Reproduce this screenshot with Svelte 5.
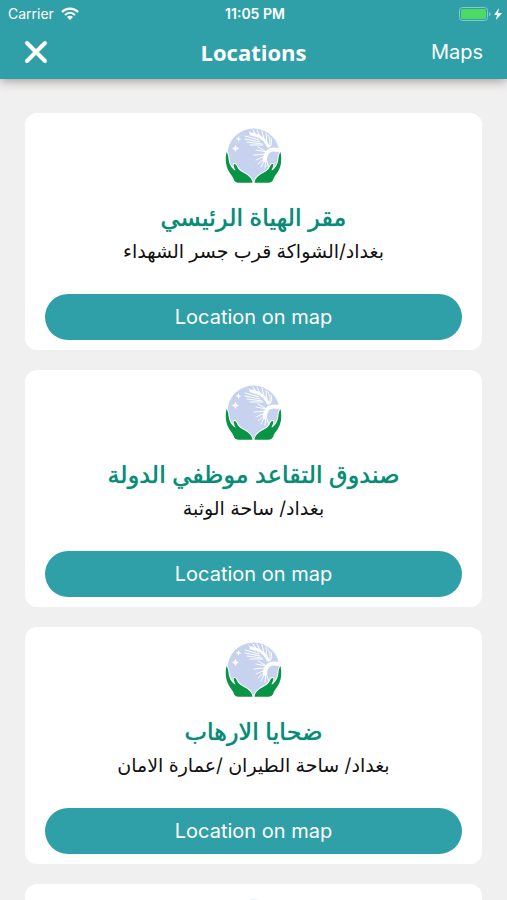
<script lang="ts">
    interface Place {
        name: string;
        address: string;
    }

    const places: Place[] = [
        { name: "مقر الهياة الرئيسي", address: "بغداد/الشواكة قرب جسر الشهداء" },
        { name: "صندوق التقاعد موظفي الدولة", address: "بغداد/ ساحة الوثبة" },
        { name: "ضحايا الارهاب", address: "بغداد/ ساحة الطيران /عمارة الامان" },
        { name: "", address: "" },
    ];

    const hand =
        "M1.500 24c1.600 2 1.900 5 2.300 8.500.500 3.500 2.200 6.500 5.200 9.500l1.500.500C9.700 40 8 37.500 9 36.200c1-.800 2 .300 2.700 1.800 1.300 3.500 3.300 4.800 7.300 7 5 2.800 8 5.500 8.500 9.800H14.500c-3.500 0-5-1-6-4C7.500 47.500 2 43 1 35c-.400-4-.300-7.500.500-11z";
</script>

{#snippet logo()}
    <svg class="logo" viewBox="0 0 57 56" aria-hidden="true">
        <circle cx="28.500" cy="26.500" r="26" fill="#c6d2ee" />
        <!-- stars -->
        <path
            d="M13.500 8l.8 2.200 2.200.8-2.200.8-.8 2.200-.8-2.200-2.200-.8 2.200-.8zM10.500 17l1.200 2.300 2.300 1.200-2.300 1.200-1.200 2.300-1.200-2.300-2.300-1.200 2.300-1.200z"
            fill="#fff"
        />
        <!-- palm fronds -->
        <g fill="none" stroke="#fff" stroke-linecap="round">
            <path
                d="M28 2l5 8M32 2l5 10M37 3l3 12M41 5l1 12M24 4l6 5M20 8l14 4M20 11l15 3M22 14l15 2M25 17l13 0"
                stroke-width="1"
            />
            <path d="M26 6c7 1 14 5 17 12" stroke-width="3" />
            <path d="M43 7c2 4 3 8 1 12M46 10c1 3 1 6-1 9" stroke-width="1" />
            <path
                d="M42 24l-11-2M40 26l-11 1M40 28l-9 4M40 30l-7 6M40 31l-4 8M41 32l-1 8M42 34l2 6M40 23l-7-4"
                stroke-width="1"
            />
            <path d="M53 22c-7-2-13 1-13 10" stroke-width="4" />
        </g>
        <!-- hands -->
        <g fill="#079447" stroke="#fff" stroke-width="2" paint-order="stroke">
            <path d={hand} />
            <path d={hand} transform="translate(57 0) scale(-1 1)" />
        </g>
    </svg>
{/snippet}

<div class="screen">
    <header>
        <div class="status">
            <div class="carrier">
                <span>Carrier</span>
                <svg class="wifi" viewBox="0 0 18 13" aria-hidden="true">
                    <g fill="none" stroke="#fff" stroke-width="2.200">
                        <path d="M1 5c4.500-4.500 11.500-4.500 16 0" />
                        <path d="M4 8c3-3 7-3 10 0" />
                    </g>
                    <path d="M6 10c2-1.600 4-1.600 6 0l-3 3z" fill="#fff" />
                </svg>
            </div>
            <span class="time">11:05 PM</span>
            <div class="power">
                <svg class="battery" viewBox="0 0 43 14" aria-hidden="true">
                    <rect x="0.500" y="0.500" width="28" height="13" rx="3" fill="none" stroke="#86c8cb" />
                    <rect x="2" y="2" width="25" height="10" rx="1.500" fill="#4cd964" />
                    <path d="M30 5c2 0 2 4 0 4z" fill="#86c8cb" />
                    <path d="M40 1l-5 7h3l-1 5 6-7h-4z" fill="#fff" />
                </svg>
            </div>
        </div>
        <nav>
            <button class="close" aria-label="Close">
                <svg viewBox="0 0 24 24" aria-hidden="true">
                    <path d="M3 3l18 18M21 3l-18 18" stroke="#fff" stroke-width="4" stroke-linecap="round" />
                </svg>
            </button>
            <h1>Locations</h1>
            <button class="maps">Maps</button>
        </nav>
    </header>

    <main>
        {#each places as place}
            <article class="card">
                {@render logo()}
                <h2 dir="rtl" lang="ar">{place.name}</h2>
                <p dir="rtl" lang="ar">{place.address}</p>
                <button class="locate">Location on map</button>
            </article>
        {/each}
    </main>
</div>

<style>
    :global(body) {
        margin: 0;
        background-color: #f0f0f0;
    }

    .screen {
        display: flex;
        flex-direction: column;
        height: 100vh;
        font-family: Inter, "Noto Sans", "DejaVu Sans", sans-serif;
    }

    button {
        border: 0;
        padding: 0;
        background: none;
        color: #fff;
        font-family: inherit;
        cursor: pointer;
    }

    header {
        position: relative;
        background-color: #30a0a8;
        color: #fff;
        box-shadow: 0 2px 10px rgba(60, 20, 20, 0.4);
    }

    .status {
        display: grid;
        grid-template-columns: 1fr auto 1fr;
        align-items: center;
        height: 27px;
        padding: 0 5px 0 8px;
        font-size: 14px;
    }

    .carrier {
        display: flex;
        align-items: center;
        gap: 7px;
    }

    .wifi {
        width: 18px;
        height: 13px;
    }

    .time {
        font-size: 14px;
        font-weight: 600;
    }

    .power {
        display: flex;
        justify-content: flex-end;
    }

    .battery {
        width: 43px;
        height: 14px;
    }

    nav {
        display: grid;
        grid-template-columns: 1fr auto 1fr;
        align-items: center;
        height: 50px;
        padding: 0 24px 2px;
    }

    .close {
        display: flex;
        justify-self: start;
    }

    .close svg {
        width: 24px;
        height: 24px;
    }

    h1 {
        margin: 0;
        font-family: "Open Sans", sans-serif;
        font-size: 22px;
        font-weight: 700;
        line-height: 28px;
    }

    .maps {
        justify-self: end;
        font-size: 20px;
    }

    main {
        flex: 1;
        display: flex;
        flex-direction: column;
        gap: 20px;
        padding: 34px 25px;
        overflow-y: auto;
        scrollbar-width: none;
    }

    .card {
        flex: none;
        display: flex;
        flex-direction: column;
        align-items: center;
        padding: 15px 20px 10px;
        border-radius: 12px;
        background-color: #fff;
        text-align: center;
    }

    .logo {
        width: 57px;
        height: 56px;
    }

    h2 {
        min-height: 36px;
        margin: 16px 0 0;
        color: #0b8a76;
        font-size: 24px;
        font-weight: 500;
        line-height: 36px;
        text-shadow: 0 0 1px #0b8a76;
    }

    p {
        min-height: 32px;
        margin: 0 0 26px;
        color: #111;
        font-size: 19px;
        line-height: 32px;
    }

    .locate {
        width: 100%;
        height: 46px;
        border-radius: 23px;
        background-color: #30a0a8;
        font-size: 20px;
    }
</style>
